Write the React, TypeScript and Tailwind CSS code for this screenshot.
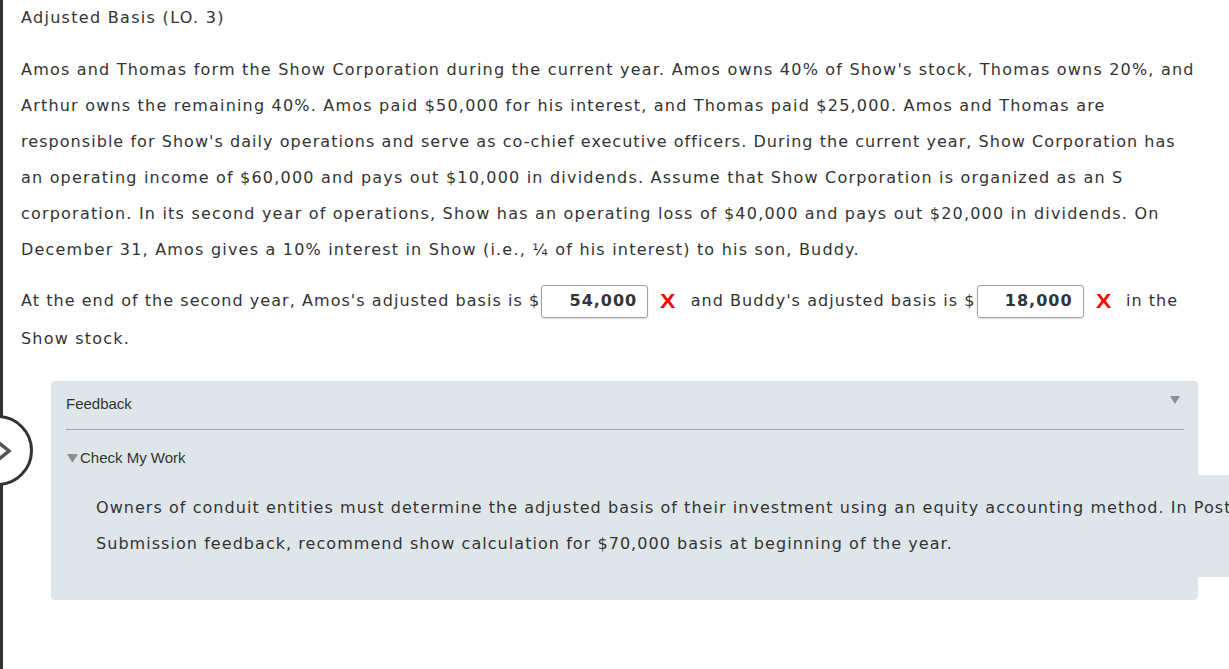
import React from 'react';

const lines = [
  "Amos and Thomas form the Show Corporation during the current year. Amos owns 40% of Show's stock, Thomas owns 20%, and",
  "Arthur owns the remaining 40%. Amos paid $50,000 for his interest, and Thomas paid $25,000. Amos and Thomas are",
  "responsible for Show's daily operations and serve as co-chief executive officers. During the current year, Show Corporation has",
  "an operating income of $60,000 and pays out $10,000 in dividends. Assume that Show Corporation is organized as an S",
  "corporation. In its second year of operations, Show has an operating loss of $40,000 and pays out $20,000 in dividends. On",
  "December 31, Amos gives a 10% interest in Show (i.e., \u00BC of his interest) to his son, Buddy.",
];

function AnswerBox({ value }: { value: string }) {
  return (
    <span className="inline-flex items-center justify-end w-[107px] h-[33px] pr-[10px] border border-[#a0a0a0] rounded-[3px] shadow-[0_1px_2px_rgba(0,0,0,0.15)] bg-white font-bold text-[#333] tracking-[1px]">
      {value}
    </span>
  );
}

function WrongMark() {
  return (
    <span className="inline-block ml-[13px] mr-[15px] text-[#f00] font-bold text-[20px] font-['Liberation_Sans',Arial,sans-serif] leading-none scale-x-[1.15]">
      X
    </span>
  );
}

function Caret({ size }: { size: number }) {
  return (
    <svg width={size} height={size * 0.8} viewBox="0 0 10 8">
      <path d="M0 0 H10 L5 8 Z" fill="#8a8f92" />
    </svg>
  );
}

export default function App() {
  return (
    <div className="relative w-full h-[669px] overflow-hidden bg-white text-[#333] font-['DejaVu_Sans',Verdana,sans-serif] text-[16px]">
      {/* left rail + collapse toggle */}
      <div className="absolute left-0 top-0 w-[3px] h-full bg-[#333]" />
      <div className="absolute left-[-38px] top-[415px] w-[71px] h-[71px] rounded-full border-[3px] border-[#333] bg-white" />
      <svg width="14" height="22" viewBox="0 0 14 22" className="absolute left-0 top-[440px]">
        <path d="M-2 2 L9 11 L-2 20" fill="none" stroke="#555" strokeWidth="3.5" />
      </svg>

      <div className="pl-[21px] pt-[6px]">
        <div className="leading-[24px] tracking-[1.3px]">Adjusted Basis (LO. 3)</div>

        <div className="mt-[22px] leading-[36px]">
          {lines.map((l, i) => (
            <div key={i} className={`whitespace-nowrap ${i === 2 ? 'tracking-[1.05px]' : 'tracking-[1.2px]'}`}>
              {l}
            </div>
          ))}
        </div>

        <div className="mt-[14px]">
          <div className="whitespace-nowrap h-[38px] flex items-center tracking-[1.05px]">
            <span className="mr-[1px]">At the end of the second year, Amos's adjusted basis is $</span>
            <AnswerBox value="54,000" />
            <WrongMark />
            <span className="mr-[1px]">and Buddy's adjusted basis is $</span>
            <AnswerBox value="18,000" />
            <WrongMark />
            <span>in the</span>
          </div>
          <div className="leading-[38px] tracking-[1.2px]">Show stock.</div>
        </div>

        <div className="mt-[23px] ml-[30px] w-[1147px] bg-[#dfe6e9] rounded-[4px] pl-[15px] pr-[14px] pt-[13px] pb-[23px]">
          <div className="relative font-['Liberation_Sans',Arial,sans-serif] text-[15px] leading-[20px] pb-[15px] border-b border-[#9aa3a7]">
            Feedback
            <span className="absolute right-[4px] top-[2px]">
              <Caret size={10} />
            </span>
          </div>
          <div className="mt-[18px] font-['Liberation_Sans',Arial,sans-serif] text-[15px] leading-[20px] flex items-center">
            <span className="ml-[1px] mr-[2px]">
              <Caret size={11} />
            </span>
            Check My Work
          </div>
          <div className="mt-[7px] ml-[15px] w-[1250px] bg-[#dfe6e9] pl-[15px] py-[15px] leading-[36px] tracking-[1.05px]">
            <div className="whitespace-nowrap">
              Owners of conduit entities must determine the adjusted basis of their investment using an equity accounting method. In Post-
            </div>
            <div className="whitespace-nowrap">
              Submission feedback, recommend show calculation for $70,000 basis at beginning of the year.
            </div>
          </div>
        </div>
      </div>
    </div>
  );
}
